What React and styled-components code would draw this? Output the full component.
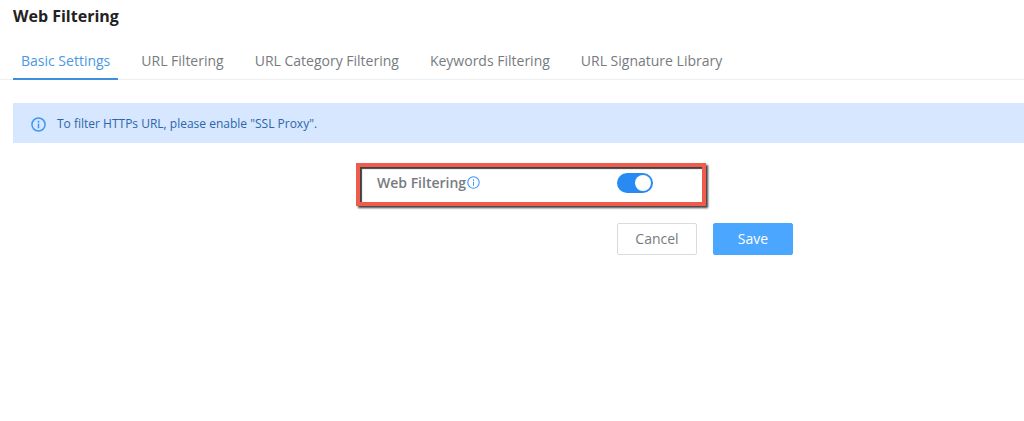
import { useState } from 'react';
import styled, { createGlobalStyle } from 'styled-components';

const GlobalStyle = createGlobalStyle`
  * {
    box-sizing: border-box;
  }

  body {
    margin: 0;
    background: #fff;
    color: #777b7f;
    font-family: 'Open Sans', 'Noto Sans', sans-serif;
    font-size: 14px;
    line-height: 20px;
  }

  button {
    font: inherit;
  }
`;

const Title = styled.h1`
  margin: 0;
  padding: 4px 13px 0;
  color: #222;
  font-size: 16px;
  font-weight: 700;
  line-height: 24px;
`;

const Tabs = styled.nav`
  display: flex;
  gap: 15px;
  margin-top: 12px;
  padding: 0 13px;
  border-bottom: 1px solid #eceff2;
`;

const Tab = styled.a`
  margin-bottom: -1px;
  padding: 11px 8px 7px;
  border-bottom: 2px solid ${({ $active }) => ($active ? '#3d8fdb' : 'transparent')};
  color: ${({ $active }) => ($active ? '#4a98e2' : '#777b7f')};
  text-decoration: none;
  white-space: nowrap;
`;

const Notice = styled.div`
  display: flex;
  align-items: center;
  gap: 11px;
  min-height: 40px;
  margin: 23px 0 0 13px;
  padding: 2px 18px 0;
  background: #d6e7ff;
  color: #2c66a8;
  font-size: 12px;
`;

const Icon = styled.svg`
  flex: none;
  width: ${({ $size }) => $size}px;
  height: ${({ $size }) => $size}px;
  color: #3f97f5;
`;

const Form = styled.form`
  padding: 20px 0 0 356px;
`;

const Highlight = styled.div`
  display: flex;
  align-items: center;
  width: 350px;
  height: 43px;
  border: 4px solid #ef5b4c;
  padding: 0 17px 4px;
  box-shadow:
    2px 2px 2px rgba(0, 0, 0, 0.75),
    inset 2px 2px 1px rgba(0, 0, 0, 0.75);
`;

const Label = styled.label`
  display: flex;
  align-items: center;
  gap: 1px;
  width: 240px;
  font-weight: 600;
`;

const Switch = styled.input`
  appearance: none;
  display: flex;
  width: 36px;
  height: 20px;
  margin: 0;
  padding: 2px;
  border-radius: 10px;
  background: #c4c8cc;
  cursor: pointer;

  &::before {
    content: '';
    width: 16px;
    height: 16px;
    border-radius: 50%;
    background: #fff;
  }

  &:checked {
    justify-content: flex-end;
    background: #288af2;
  }
`;

const Actions = styled.div`
  display: flex;
  gap: 16px;
  margin-top: 17px;
  padding-left: 261px;
`;

const Button = styled.button`
  width: 80px;
  height: 32px;
  padding: 0;
  border: 1px solid ${({ $primary }) => ($primary ? '#4ba6ff' : '#d9dcdf')};
  border-radius: 2px;
  background: ${({ $primary }) => ($primary ? '#4ba6ff' : '#fff')};
  color: ${({ $primary }) => ($primary ? '#fff' : '#777b7f')};
  cursor: pointer;
`;

const tabs = [
  'Basic Settings',
  'URL Filtering',
  'URL Category Filtering',
  'Keywords Filtering',
  'URL Signature Library',
];

function InfoIcon({ size, stroke }) {
  return (
    <Icon $size={size} viewBox="0 0 16 16" fill="none" stroke="currentColor" strokeWidth={stroke} aria-hidden="true">
      <circle cx="8" cy="8" r="7" />
      <path d="M8 7v5" />
      <path d="M8 4v2" />
    </Icon>
  );
}

export default function App() {
  const [active, setActive] = useState(tabs[0]);
  const [enabled, setEnabled] = useState(true);

  return (
    <>
      <GlobalStyle />
      <Title>Web Filtering</Title>
      <Tabs>
        {tabs.map((tab) => (
          <Tab key={tab} href="#" $active={tab === active} onClick={() => setActive(tab)}>
            {tab}
          </Tab>
        ))}
      </Tabs>
      <Notice>
        <InfoIcon size={15} stroke={1.6} />
        <span>To filter HTTPs URL, please enable "SSL Proxy".</span>
      </Notice>
      <Form onSubmit={(e) => e.preventDefault()}>
        <Highlight>
          <Label htmlFor="web-filtering">
            Web Filtering
            <InfoIcon size={13} stroke={1.3} />
          </Label>
          <Switch
            id="web-filtering"
            type="checkbox"
            role="switch"
            checked={enabled}
            onChange={(e) => setEnabled(e.target.checked)}
          />
        </Highlight>
        <Actions>
          <Button type="button">Cancel</Button>
          <Button type="submit" $primary>
            Save
          </Button>
        </Actions>
      </Form>
    </>
  );
}
